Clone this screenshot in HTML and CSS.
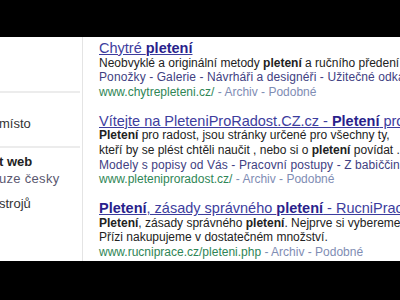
FILE: index.html
```html
<!DOCTYPE html>
<html lang="cs">
<head>
  <meta charset="UTF-8">
  <title>pletení - Hledat</title>
  <link rel="stylesheet" href="styles.css">
</head>
<body>
  <div id="screen">
    <div class="letterbox"></div>
    <div id="page">
      <div id="sidebar">
        <div class="side-group first">
          <div class="side-item">místo</div>
        </div>
        <div class="side-group">
          <div class="side-item selected">t web</div>
          <div class="side-item muted">uze česky</div>
          <div class="side-item tools">strojů</div>
        </div>
      </div>
      <div id="results">
        <div class="result">
          <a class="title" href="#">Chytré <b>pletení</b></a>
          <div class="line">Neobvyklé a originální metody <b>pletení</b> a ručního předení ...</div>
          <div class="line sitelinks">Ponožky - Galerie - Návrháři a designéři - Užitečné odkazy</div>
          <div class="line url">www.chytrepleteni.cz/ <span class="extra">- Archiv - Podobné</span></div>
        </div>
        <div class="result">
          <a class="title" href="#">Vítejte na PleteniProRadost.CZ.cz - <b>Pletení</b> pro radost</a>
          <div class="line"><b>Pletení</b> pro radost, jsou stránky určené pro všechny ty,</div>
          <div class="line">kteří by se plést chtěli naučit , nebo si o <b>pletení</b> povídat ...</div>
          <div class="line sitelinks">Modely s popisy od Vás - Pracovní postupy - Z babiččina šuplíku</div>
          <div class="line url">www.pleteniproradost.cz/ <span class="extra">- Archiv - Podobné</span></div>
        </div>
        <div class="result">
          <a class="title" href="#"><b>Pletení</b>, zásady správného <b>pletení</b> - RucniPrace.cz</a>
          <div class="line"><b>Pletení</b>, zásady správného <b>pletení</b>. Nejprve si vybereme ...</div>
          <div class="line">Přízi nakupujeme v dostatečném množství.</div>
          <div class="line url">www.rucniprace.cz/pleteni.php <span class="extra">- Archiv - Podobné</span></div>
        </div>
      </div>
    </div>
    <div class="letterbox bottom"></div>
  </div>
</body>
</html>
```

FILE: styles.css
```css
body {
  margin: 0;
  background: #000;
  overflow: hidden;
  font-family: "Liberation Sans", Arial, sans-serif;
}
#screen {
  width: 400px;
  height: 300px;
  display: flex;
  flex-direction: column;
}
.letterbox {
  height: 37px;
  background: #000;
}
.letterbox.bottom {
  flex: 1;
}
#page {
  height: 224px;
  background: #fff;
  display: flex;
  overflow: hidden;
}
#sidebar {
  width: 82px;
  flex-shrink: 0;
  border-right: 1px solid #e4e4e4;
  font-size: 13px;
  line-height: 15px;
  color: #333;
  white-space: nowrap;
  overflow: hidden;
}
.side-group {
  border-top: 2px solid #ececec;
  margin-right: 2px;
  padding: 5px 0 0;
}
.side-group.first {
  margin-top: 54px;
  padding: 23px 0 15px;
}
.side-item {
  margin-left: -1px;
}
.side-item.selected {
  font-weight: bold;
  color: #222;
  margin-top: 1px;
}
.side-item.muted {
  margin-top: 2px;
  color: #5a5870;
  letter-spacing: 0.3px;
}
.side-item.tools {
  margin-top: 10px;
}
#results {
  flex: 1;
  min-width: 0;
  padding: 4px 0 0 16px;
  overflow: hidden;
  white-space: nowrap;
}
.result {
  margin-bottom: 14.4px;
  line-height: 14.6px;
}
.title {
  display: block;
  font-size: 14.5px;
  color: #3d3d9e;
  text-decoration: underline;
}
.title b {
  color: #2a1f8c;
}
.line {
  font-size: 12px;
  color: #222;
}
.sitelinks {
  letter-spacing: 0.1px;
  color: #414182;
}
.url {
  color: #2f8656;
}
.url .extra {
  color: #7f8db4;
}
```
